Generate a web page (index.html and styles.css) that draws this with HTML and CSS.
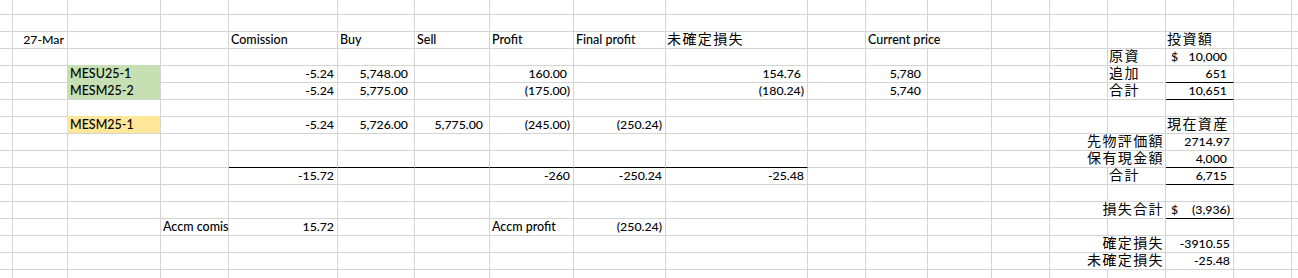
FILE: index.html
```html
<!DOCTYPE html>
<html lang="ja">
<head>
<meta charset="utf-8">
<title>Sheet</title>
<link rel="stylesheet" href="styles.css">
</head>
<body>
<div class="sheet">
<!-- r0 -->
<div class="c"></div><div class="c"></div><div class="c"></div><div class="c"></div><div class="c"></div><div class="c"></div><div class="c"></div><div class="c"></div><div class="c"></div><div class="c"></div><div class="c"></div><div class="c"></div><div class="c"></div><div class="c"></div><div class="c"></div><div class="c"></div><div class="c"></div><div class="c"></div><div class="c"></div>
<!-- r1 -->
<div class="c"></div><div class="c"></div><div class="c"></div><div class="c"></div><div class="c"></div><div class="c"></div><div class="c"></div><div class="c"></div><div class="c"></div><div class="c"></div><div class="c"></div><div class="c"></div><div class="c"></div><div class="c"></div><div class="c"></div><div class="c"></div><div class="c"></div><div class="c"></div><div class="c"></div>
<!-- r2 -->
<div class="c"></div>
<div class="c r">27-Mar</div>
<div class="c"></div>
<div class="c"></div>
<div class="c">Comission</div>
<div class="c">Buy</div>
<div class="c">Sell</div>
<div class="c">Profit</div>
<div class="c">Final profit</div>
<div class="c j">未確定損失</div>
<div class="c"></div>
<div class="c s2">Current price</div>
<div class="c"></div>
<div class="c"></div>
<div class="c"></div>
<div class="c j">投資額</div>
<div class="c"></div>
<div class="c"></div>
<!-- r3 -->
<div class="c"></div><div class="c"></div><div class="c"></div><div class="c"></div><div class="c"></div><div class="c"></div><div class="c"></div><div class="c"></div><div class="c"></div><div class="c"></div><div class="c"></div><div class="c"></div><div class="c"></div><div class="c"></div><div class="c"></div>
<div class="c j">原資</div>
<div class="c cur"><span>$</span><span>10,000</span></div>
<div class="c"></div>
<div class="c"></div>
<!-- r4 -->
<div class="c"></div>
<div class="c"></div>
<div class="c g gt">MESU25-1</div>
<div class="c"></div>
<div class="c r">-5.24</div>
<div class="c a">5,748.00</div>
<div class="c"></div>
<div class="c a">160.00</div>
<div class="c"></div>
<div class="c a">154.76</div>
<div class="c"></div>
<div class="c a">5,780</div>
<div class="c"></div>
<div class="c"></div>
<div class="c"></div>
<div class="c j">追加</div>
<div class="c a bb">651</div>
<div class="c"></div>
<div class="c"></div>
<!-- r5 -->
<div class="c"></div>
<div class="c"></div>
<div class="c g">MESM25-2</div>
<div class="c"></div>
<div class="c r">-5.24</div>
<div class="c a">5,775.00</div>
<div class="c"></div>
<div class="c r">(175.00)</div>
<div class="c"></div>
<div class="c r">(180.24)</div>
<div class="c"></div>
<div class="c a">5,740</div>
<div class="c"></div>
<div class="c"></div>
<div class="c"></div>
<div class="c j">合計</div>
<div class="c a bb">10,651</div>
<div class="c"></div>
<div class="c"></div>
<!-- r6 -->
<div class="c"></div><div class="c"></div><div class="c"></div><div class="c"></div><div class="c"></div><div class="c"></div><div class="c"></div><div class="c"></div><div class="c"></div><div class="c"></div><div class="c"></div><div class="c"></div><div class="c"></div><div class="c"></div><div class="c"></div><div class="c"></div><div class="c"></div><div class="c"></div><div class="c"></div>
<!-- r7 -->
<div class="c"></div>
<div class="c"></div>
<div class="c y">MESM25-1</div>
<div class="c"></div>
<div class="c r">-5.24</div>
<div class="c a">5,726.00</div>
<div class="c a">5,775.00</div>
<div class="c r">(245.00)</div>
<div class="c r">(250.24)</div>
<div class="c"></div><div class="c"></div><div class="c"></div><div class="c"></div><div class="c"></div><div class="c"></div><div class="c"></div>
<div class="c j">現在資産</div>
<div class="c"></div>
<div class="c"></div>
<!-- r8 -->
<div class="c"></div><div class="c"></div><div class="c"></div><div class="c"></div><div class="c"></div><div class="c"></div><div class="c"></div><div class="c"></div><div class="c"></div><div class="c"></div><div class="c"></div><div class="c"></div><div class="c"></div><div class="c"></div>
<div class="c s2 j jr">先物評価額</div>
<div class="c r">2714.97</div>
<div class="c"></div>
<div class="c"></div>
<!-- r9 -->
<div class="c"></div><div class="c"></div><div class="c"></div><div class="c"></div>
<div class="c bb"></div><div class="c bb"></div><div class="c bb"></div><div class="c bb"></div><div class="c bb"></div><div class="c bb"></div>
<div class="c"></div><div class="c"></div><div class="c"></div><div class="c"></div>
<div class="c s2 j jr">保有現金額</div>
<div class="c a bb">4,000</div>
<div class="c"></div>
<div class="c"></div>
<!-- r10 -->
<div class="c"></div><div class="c"></div><div class="c"></div><div class="c"></div>
<div class="c r">-15.72</div>
<div class="c"></div>
<div class="c"></div>
<div class="c r">-260</div>
<div class="c r">-250.24</div>
<div class="c r">-25.48</div>
<div class="c"></div><div class="c"></div><div class="c"></div><div class="c"></div><div class="c"></div>
<div class="c j">合計</div>
<div class="c a bb">6,715</div>
<div class="c"></div>
<div class="c"></div>
<!-- r11 -->
<div class="c"></div><div class="c"></div><div class="c"></div><div class="c"></div><div class="c"></div><div class="c"></div><div class="c"></div><div class="c"></div><div class="c"></div><div class="c"></div><div class="c"></div><div class="c"></div><div class="c"></div><div class="c"></div><div class="c"></div><div class="c"></div><div class="c"></div><div class="c"></div><div class="c"></div>
<!-- r12 -->
<div class="c"></div><div class="c"></div><div class="c"></div><div class="c"></div><div class="c"></div><div class="c"></div><div class="c"></div><div class="c"></div><div class="c"></div><div class="c"></div><div class="c"></div><div class="c"></div><div class="c"></div><div class="c"></div>
<div class="c s2 j jr">損失合計</div>
<div class="c cur neg bb"><span>$</span><span>(3,936)</span></div>
<div class="c"></div>
<div class="c"></div>
<!-- r13 -->
<div class="c"></div><div class="c"></div><div class="c"></div>
<div class="c">Accm comis</div>
<div class="c r">15.72</div>
<div class="c"></div>
<div class="c"></div>
<div class="c">Accm profit</div>
<div class="c r">(250.24)</div>
<div class="c"></div><div class="c"></div><div class="c"></div><div class="c"></div><div class="c"></div><div class="c"></div><div class="c"></div><div class="c"></div><div class="c"></div><div class="c"></div>
<!-- r14 -->
<div class="c"></div><div class="c"></div><div class="c"></div><div class="c"></div><div class="c"></div><div class="c"></div><div class="c"></div><div class="c"></div><div class="c"></div><div class="c"></div><div class="c"></div><div class="c"></div><div class="c"></div><div class="c"></div>
<div class="c s2 j jr">確定損失</div>
<div class="c r">-3910.55</div>
<div class="c"></div>
<div class="c"></div>
<!-- r15 -->
<div class="c"></div><div class="c"></div><div class="c"></div><div class="c"></div><div class="c"></div><div class="c"></div><div class="c"></div><div class="c"></div><div class="c"></div><div class="c"></div><div class="c"></div><div class="c"></div><div class="c"></div><div class="c"></div>
<div class="c s2 j jr">未確定損失</div>
<div class="c r">-25.48</div>
<div class="c"></div>
<div class="c"></div>
<!-- r16 -->
<div class="c"></div><div class="c"></div><div class="c"></div><div class="c"></div><div class="c"></div><div class="c"></div><div class="c"></div><div class="c"></div><div class="c"></div><div class="c"></div><div class="c"></div><div class="c"></div><div class="c"></div><div class="c"></div><div class="c"></div><div class="c"></div><div class="c"></div><div class="c"></div><div class="c"></div>
</div>
</body>
</html>
```

FILE: styles.css
```css
html, body {
  margin: 0;
  padding: 0;
  overflow: hidden;
  background: #fff;
}

.sheet {
  display: grid;
  grid-template-columns: 13px 55px 93px 68px 109px 77px 75px 84px 92px 142px 58px 62px 64px 58px 58px 58px 68px 58px 7px;
  grid-template-rows: 15px repeat(15, 17px) 9px;
  width: 1299px;
  font-family: Lato, "Liberation Sans", sans-serif;
  font-size: 12.5px;
  font-weight: 500;
  color: #000;
}

.c {
  box-sizing: border-box;
  border-right: 1px solid #d4d4d4;
  border-bottom: 1px solid #d4d4d4;
  padding: 0 2px;
  line-height: 16px;
  white-space: nowrap;
  overflow: visible;
  min-width: 0;
}

.r {
  text-align: right;
  padding-right: 3px;
  font-size: 12.3px;
}

.a {
  text-align: right;
  padding-right: 6px;
  font-size: 12.3px;
}

.j {
  font-family: "Noto Sans CJK JP", sans-serif;
  font-size: 14px;
  font-weight: 400;
  letter-spacing: 1.4px;
  line-height: 12px;
  padding-left: 1px;
}

.jr {
  text-align: right;
  padding-right: 1px;
}

.s2 {
  grid-column: span 2;
}

.g {
  background: #c6e0b4;
  box-shadow: -1px -1px 0 #c6e0b4;
}

.gt {
  border-bottom-color: #c6e0b4;
}

.y {
  background: #ffe699;
  box-shadow: -1px -1px 0 #ffe699;
}

.bb {
  border-bottom-color: #000;
}

.cur {
  display: flex;
  justify-content: space-between;
  padding-left: 5px;
  padding-right: 6px;
  font-size: 12.3px;
}

.cur.neg {
  padding-right: 3px;
}
```
